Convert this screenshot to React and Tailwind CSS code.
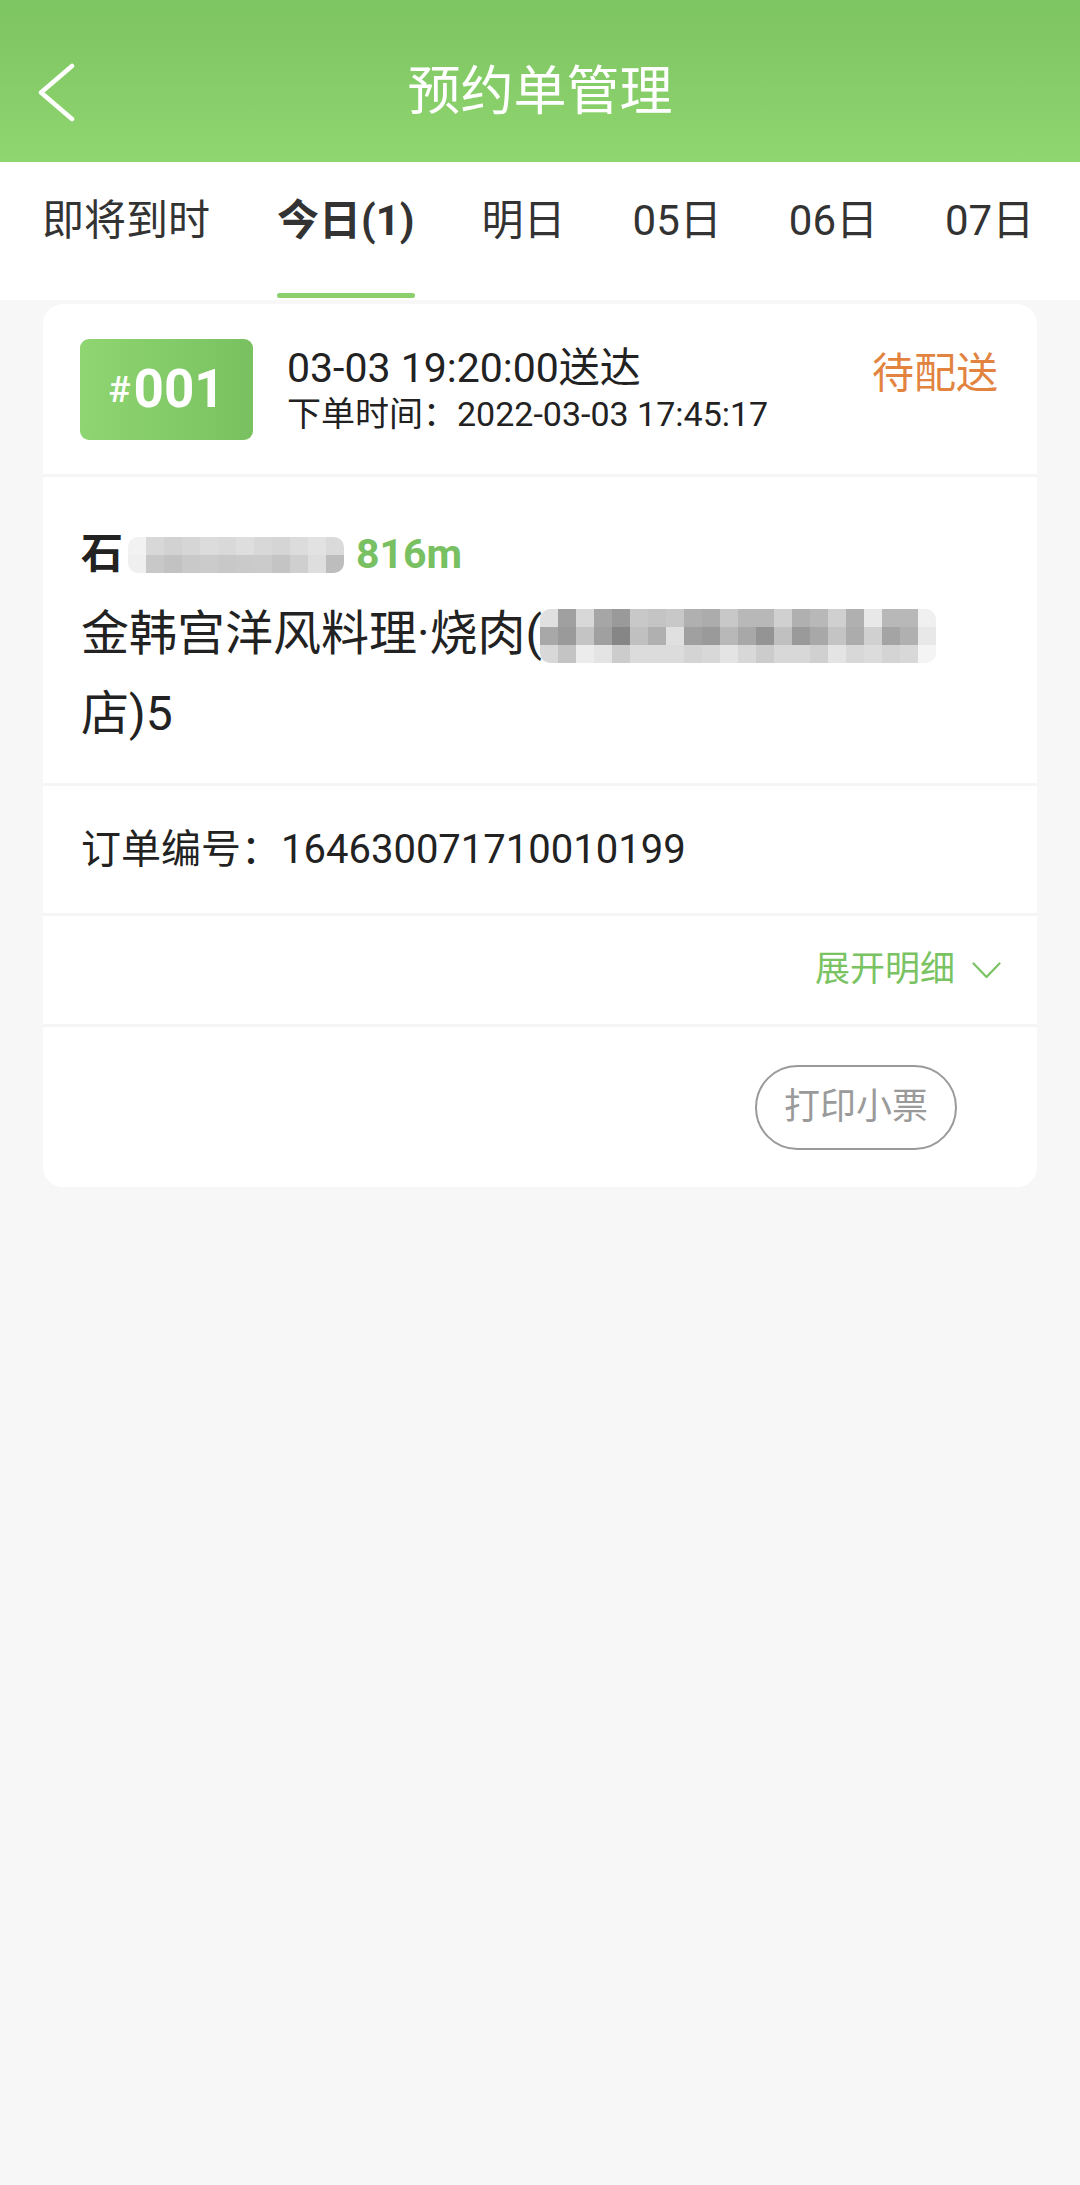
import React from "react";

const FONT = { fontFamily: 'Roboto, "Noto Sans CJK SC", "Noto Sans", sans-serif' };

const nameBlur = [
  ["#f2f2f2", "#d8d8d8", "#d2d2d2", "#d6d6d6", "#dcdcdc", "#d9d9d9", "#dedede", "#d8d8d8", "#d5d5d5", "#dcdcdc", "#e2e2e2", "#dadada"],
  ["#efefef", "#c8c8c8", "#c2c2c2", "#c9c9c9", "#cbcbcb", "#c8c8c8", "#cacaca", "#cbcbcb", "#c4c4c4", "#cfcfcf", "#dedede", "#bdbdbd"],
];

const storeBlur = [
  ["#e0e0e0", "#a0a0a0", "#d8d8d8", "#a6a6a6", "#9a9a9a", "#c8c8c8", "#c4c4c4", "#c8c8c8", "#b0b0b0", "#acacac", "#c8c8c8", "#b8b8b8", "#b8b8b8", "#d0d0d0", "#b0b0b0", "#b8b8b8", "#d0d0d0", "#b0b0b0", "#e8e8e8", "#b8b8b8", "#b8b8b8", "#f0f0f0"],
  ["#a8a8a8", "#9a9a9a", "#c4c4c4", "#a0a0a0", "#868686", "#c0c0c0", "#b0b0b0", "#e0e0e0", "#a0a0a0", "#9a9a9a", "#b8b8b8", "#a8a8a8", "#949494", "#c0c0c0", "#9a9a9a", "#a8a8a8", "#c4c4c4", "#acacac", "#d0d0d0", "#a4a4a4", "#b0b0b0", "#e8e8e8"],
  ["#d8d8d8", "#c4c4c4", "#ececec", "#e4e4e4", "#cccccc", "#dcdcdc", "#dcdcdc", "#dcdcdc", "#d4d4d4", "#d8d8d8", "#e4e4e4", "#d8d8d8", "#cccccc", "#d8d8d8", "#d8d8d8", "#d0d0d0", "#e4e4e4", "#d8d8d8", "#dcdcdc", "#d4d4d4", "#d8d8d8", "#f4f4f4"],
];

function Mosaic({ rows, className }) {
  return (
    <span className={"inline-block overflow-hidden rounded-[10px] blur-[0.6px] leading-none " + className}>
      {rows.map((row, i) => (
        <span key={i} className="flex">
          {row.map((c, j) => (
            <span key={j} className="block h-[18px] w-[18px]" style={{ backgroundColor: c }} />
          ))}
        </span>
      ))}
    </span>
  );
}

const tabs = ["即将到时", "今日(1)", "明日", "05日", "06日", "07日"];

export default function App() {
  return (
    <div className="min-h-[2185px] w-[1080px] bg-[#f7f7f7]" style={FONT}>
      {/* Header */}
      <div className="grid h-[162px] grid-cols-[1fr_auto_1fr] items-center bg-gradient-to-b from-[#7dc462] to-[#8fd670] pt-[22px]">
        <div className="pl-[37px]">
          <svg width="40" height="60" viewBox="0 0 40 60" fill="none">
            <polyline points="35,4 4,30.5 35,57" stroke="#ffffff" strokeWidth="4.5" strokeLinecap="round" strokeLinejoin="round" />
          </svg>
        </div>
        <div className="text-[53px] leading-[64px] text-white">预约单管理</div>
        <div />
      </div>

      {/* Tabs */}
      <div className="flex h-[138px] gap-[67px] bg-white px-[42px]">
        {tabs.map((t, i) => (
          <div key={t} className="flex flex-col">
            <div
              className={
                "pt-[34px] text-[42px] leading-[50px] text-[#333333] " +
                (i === 1 ? "font-bold" : "font-normal")
              }
            >
              {t}
            </div>
            <div className={"mb-[2px] mt-auto h-[5px] w-full rounded-[3px] " + (i === 1 ? "bg-[#8bd06c]" : "bg-transparent")} />
          </div>
        ))}
      </div>

      {/* Card */}
      <div className="mx-[43px] mt-[4px] overflow-hidden rounded-[20px] bg-white">
        {/* card header */}
        <div className="flex h-[170px] items-center pl-[37px] pr-[39px]">
          <div className="flex h-[101px] w-[173px] shrink-0 items-center justify-center rounded-[9px] bg-gradient-to-r from-[#8fd672] to-[#79c160] text-white">
            <span className="mr-[3px] text-[37px] font-medium leading-none">#</span>
            <span className="text-[53px] font-bold leading-none">001</span>
          </div>
          <div className="ml-[34px] flex flex-1 items-start justify-between">
            <div className="flex flex-col text-[#222222]">
              <div className="text-[41px] leading-[48px]">03-03 19:20:00送达</div>
              <div className="mt-[2px] text-[34px] leading-[40px]">下单时间：2022-03-03 17:45:17</div>
            </div>
            <div className="mt-[5px] text-[42px] leading-[50px] text-[#e2843f]">待配送</div>
          </div>
        </div>

        {/* body */}
        <div className="border-t-[3px] border-[#f5f5f5] pb-[29px] pl-[38px] pr-[38px] pt-[49px]">
          <div className="flex h-[56px] items-center">
            <span className="text-[42px] font-bold leading-[56px] text-[#222222]">石</span>
            <Mosaic rows={nameBlur} className="ml-[5px] mt-[2px]" />
            <span className="ml-[12px] text-[41px] font-bold leading-[56px] text-[#78c062]">816m</span>
          </div>
          <div className="mt-[12px] text-[48px] leading-[80px] text-[#222222]">
            金韩宫洋风料理·烧肉(
            <Mosaic rows={storeBlur} className="-ml-[2px] mt-[15px] align-top" />
            <br />
            店)5
          </div>
        </div>

        {/* order no */}
        <div className="flex h-[130px] items-center border-t-[3px] border-[#f5f5f5] pl-[38px] text-[40px] leading-[48px] text-[#222222]">
          订单编号：164630071710010199
        </div>

        {/* expand */}
        <div className="flex h-[111px] items-center justify-end border-t-[3px] border-[#f5f5f5] pr-[36px]">
          <span className="text-[35px] leading-[44px] text-[#7ac363]">展开明细</span>
          <svg className="ml-[17px]" width="29" height="17" viewBox="0 0 29 17" fill="none">
            <polyline points="1.5,1.5 14.5,15 27.5,1.5" stroke="#7ac363" strokeWidth="2.2" strokeLinejoin="round" strokeLinecap="round" />
          </svg>
        </div>

        {/* footer */}
        <div className="flex h-[163px] items-center justify-end border-t-[3px] border-[#f5f5f5] pr-[80px]">
          <div className="flex h-[85px] w-[202px] items-center justify-center rounded-full border-[2.5px] border-[#9a9a9a] text-[36px] leading-[44px] text-[#9a9a9a]">
            打印小票
          </div>
        </div>
      </div>
    </div>
  );
}
